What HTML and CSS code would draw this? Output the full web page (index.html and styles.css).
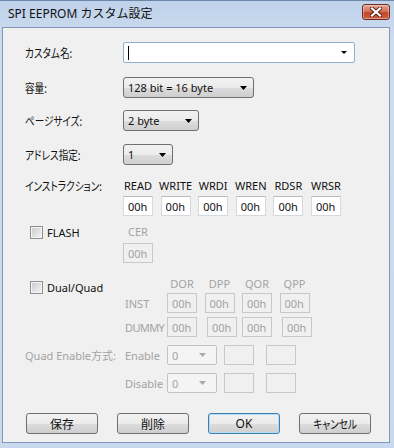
FILE: index.html
```html
<!DOCTYPE html>
<html lang="ja">
<head>
    <meta charset="UTF-8">
    <meta name="viewport" content="width=device-width, initial-scale=1.0">
    <title>SPI EEPROM カスタム設定</title>
    <link rel="stylesheet" href="styles.css">
</head>
<body>

    <div class="window">
        <!-- Title bar -->
        <div class="titlebar">
            <span class="title">SPI EEPROM カスタム設定</span>
            <button class="close-btn" type="button">
                <svg width="12" height="10" viewBox="0 0 12 10">
                    <path d="M2 1.5 L10 8.5 M10 1.5 L2 8.5" stroke="#5a1d14" stroke-width="4" stroke-linecap="square"/>
                    <path d="M2 1.5 L10 8.5 M10 1.5 L2 8.5" stroke="#ffffff" stroke-width="2.2" stroke-linecap="square"/>
                </svg>
            </button>
        </div>

        <div class="client">
            <!-- Basic settings -->
            <div class="row row-name">
                <span class="lbl"><span class="jp">カスタム名:</span></span>
                <div class="combo edit w-name">
                    <span class="caret"></span>
                    <span class="val"></span>
                    <svg class="arrow" width="6" height="3" viewBox="0 0 6 3"><polygon points="0,0 6,0 3,3" fill="#000"/></svg>
                </div>
            </div>
            <div class="row row-size">
                <span class="lbl"><span class="jp">容量:</span></span>
                <div class="combo w-size">
                    <span class="val">128 bit = 16 byte</span>
                    <svg class="arrow" width="7" height="4" viewBox="0 0 7 4"><polygon points="0,0 7,0 3.5,4" fill="#000"/></svg>
                </div>
            </div>
            <div class="row row-page">
                <span class="lbl"><span class="jp">ページサイズ:</span></span>
                <div class="combo w-page">
                    <span class="val">2 byte</span>
                    <svg class="arrow" width="7" height="4" viewBox="0 0 7 4"><polygon points="0,0 7,0 3.5,4" fill="#000"/></svg>
                </div>
            </div>
            <div class="row row-addr">
                <span class="lbl"><span class="jp">アドレス指定:</span></span>
                <div class="combo w-addr">
                    <span class="val">1</span>
                    <svg class="arrow" width="7" height="4" viewBox="0 0 7 4"><polygon points="0,0 7,0 3.5,4" fill="#000"/></svg>
                </div>
            </div>

            <!-- Instructions -->
            <div class="instr">
                <span class="lbl"><span class="jp">インストラクション:</span></span>
                <div class="cmd-grid">
                    <span class="hdr">READ</span>
                    <span class="hdr">WRITE</span>
                    <span class="hdr">WRDI</span>
                    <span class="hdr">WREN</span>
                    <span class="hdr">RDSR</span>
                    <span class="hdr">WRSR</span>
                    <input class="tb" type="text" value="00h">
                    <input class="tb" type="text" value="00h">
                    <input class="tb" type="text" value="00h">
                    <input class="tb" type="text" value="00h">
                    <input class="tb" type="text" value="00h">
                    <input class="tb" type="text" value="00h">
                </div>
            </div>

            <!-- FLASH -->
            <div class="flash">
                <label class="check"><span class="box"></span>FLASH</label>
                <div class="cer-col">
                    <span class="hdr off">CER</span>
                    <input class="tb" type="text" value="00h" disabled>
                </div>
            </div>

            <!-- Dual / Quad -->
            <div class="dq-row dq-head">
                <label class="check dual-check"><span class="box"></span>Dual/Quad</label>
                <span class="sub"></span>
                <span class="hdr off">DOR</span>
                <span class="hdr off">DPP</span>
                <span class="hdr off">QOR</span>
                <span class="hdr off">QPP</span>
            </div>
            <div class="dq-row dq-inst">
                <span class="lbl"></span>
                <span class="sub off">INST</span>
                <input class="tb" type="text" value="00h" disabled>
                <input class="tb" type="text" value="00h" disabled>
                <input class="tb" type="text" value="00h" disabled>
                <input class="tb" type="text" value="00h" disabled>
            </div>
            <div class="dq-row dq-dummy">
                <span class="lbl"></span>
                <span class="sub off narrow">DUMMY</span>
                <input class="tb" type="text" value="00h" disabled>
                <input class="tb nudge" type="text" value="00h" disabled>
                <input class="tb" type="text" value="00h" disabled>
                <input class="tb nudge" type="text" value="00h" disabled>
            </div>

            <div class="dq-row qe-row">
                <span class="lbl plain off">Quad Enable方式:</span>
                <span class="sub off">Enable</span>
                <div class="combo dis w-qe">
                    <span class="val">0</span>
                    <svg class="arrow" width="7" height="4" viewBox="0 0 7 4"><polygon points="0,0 7,0 3.5,4" fill="#a9a9a9"/></svg>
                </div>
                <input class="tb blank" type="text" disabled>
                <input class="tb blank far" type="text" disabled>
            </div>
            <div class="dq-row qe-row">
                <span class="lbl"></span>
                <span class="sub off">Disable</span>
                <div class="combo dis w-qe">
                    <span class="val">0</span>
                    <svg class="arrow" width="7" height="4" viewBox="0 0 7 4"><polygon points="0,0 7,0 3.5,4" fill="#a9a9a9"/></svg>
                </div>
                <input class="tb blank" type="text" disabled>
                <input class="tb blank far" type="text" disabled>
            </div>

            <!-- Buttons -->
            <div class="buttons">
                <button class="btn" type="button">保存</button>
                <button class="btn" type="button">削除</button>
                <button class="btn default" type="button">OK</button>
                <button class="btn" type="button"><span class="jp">キャンセル</span></button>
            </div>
        </div>
    </div>

</body>
</html>
```

FILE: styles.css
```css
/* General */
* {
    box-sizing: border-box;
}

body {
    margin: 0;
    width: 394px;
    height: 448px;
    overflow: hidden;
    background: #fff;
    font-family: "Noto Sans", "Noto Sans CJK JP", sans-serif;
    font-size: 11px;
    color: #111;
}

/* Window frame */
.window {
    height: 448px;
    display: flex;
    flex-direction: column;
    background: linear-gradient(#bfd2ea, #cddcef 40px, #c9d9ed);
    border-top: 1px solid #6a86a8;
    padding: 0 4px 5px 2px;
}

.titlebar {
    height: 26px;
    display: flex;
    align-items: center;
    justify-content: space-between;
    padding: 0 0 0 6px;
}

.title {
    font-size: 12px;
    line-height: 16px;
}

.close-btn {
    width: 28px;
    height: 16px;
    margin-top: -4px;
    padding: 0;
    border: 1px solid #6b2a22;
    border-radius: 3px;
    background: linear-gradient(#e3a697, #d47459 45%, #c4452b 55%, #cf6046);
    display: flex;
    align-items: center;
    justify-content: center;
    box-shadow: inset 0 0 0 1px rgba(255, 255, 255, 0.35);
}

.client {
    flex: 1;
    background: #f0f0f0;
    border: 1px solid #7f98b8;
    padding: 14px 0 0 22px;
}

/* Form rows */
.row {
    display: flex;
    align-items: center;
    height: 21px;
}

.row-name { margin-bottom: 14px; }
.row-size { margin-bottom: 12px; }
.row-page { margin-bottom: 13px; }
.row-addr { margin-bottom: 13px; }

.lbl {
    width: 98px;
    flex-shrink: 0;
    white-space: nowrap;
}

/* narrow japanese glyphs, like the UI Gothic face */
.jp {
    display: inline-block;
    font-family: "Noto Sans CJK JP", sans-serif;
    font-feature-settings: "palt";
    font-size: 12px;
    transform: scaleX(0.8);
    transform-origin: left center;
    white-space: nowrap;
}

.off {
    color: #a3a3a3;
}

/* Combo boxes */
.combo {
    height: 21px;
    display: flex;
    align-items: center;
    padding: 0 6px 0 4px;
    border: 1px solid #707070;
    border-radius: 3px;
    background: linear-gradient(#f2f2f2, #ebebeb 50%, #dddddd 51%, #cfcfcf);
}

.combo .val {
    flex: 1;
    white-space: nowrap;
}

.combo.edit {
    border-radius: 2px;
    border-color: #92aed1;
    background: #fff;
    padding: 0 7px 0 4px;
}

.combo.dis {
    border-color: #c2c2c2;
    background: #f4f4f4;
    color: #a3a3a3;
    border-radius: 2px;
    padding-right: 10px;
}

.caret {
    width: 1px;
    height: 14px;
    background: #000;
}

.w-name { width: 232px; }
.w-size { width: 131px; }
.w-page { width: 76px; }
.w-addr { width: 50px; }
.w-qe { width: 50px; height: 20px; }

/* Text boxes */
.tb {
    width: 30px;
    height: 20px;
    flex-shrink: 0;
    margin: 0;
    padding: 0 0 0 4px;
    border: 1px solid #d5d8dd;
    border-top-color: #b9bdc4;
    background: #fff;
    font-family: "Noto Sans", sans-serif;
    font-size: 11px;
    color: #111;
    outline: none;
}

.tb:disabled {
    background: #f0f0f0;
    border-color: #c8c8c8;
    color: #a3a3a3;
}

/* Instruction table */
.instr {
    display: flex;
    margin-bottom: 8px;
}

.cmd-grid {
    display: grid;
    grid-template-columns: repeat(6, 30px);
    column-gap: 7.6px;
    row-gap: 2px;
}

.hdr {
    width: 30px;
    line-height: 16px;
    white-space: nowrap;
    display: flex;
    justify-content: center;
}

.instr .lbl {
    line-height: 16px;
}

/* Checkboxes */
.check {
    width: 98px;
    flex-shrink: 0;
    display: flex;
    align-items: center;
    gap: 4px;
    padding-left: 5px;
    height: 16px;
}

.box {
    width: 13px;
    height: 13px;
    border: 1px solid #8e8f8f;
    background: linear-gradient(135deg, #cbcbcb, #f4f4f4);
    box-shadow: inset 0 0 0 1px #f4f4f4;
}

.flash {
    display: flex;
    margin-bottom: 13px;
}

.cer-col {
    display: flex;
    flex-direction: column;
    gap: 3px;
}

/* Dual / Quad block */
.dq-row {
    display: flex;
    align-items: center;
}

.dq-row .sub {
    width: 44px;
    flex-shrink: 0;
    padding-left: 2px;
    white-space: nowrap;
}

.dq-row .sub.narrow {
    letter-spacing: -0.6px;
}

.dq-row .hdr,
.dq-row .tb {
    margin-right: 7.5px;
}

.dq-head {
    height: 16px;
    align-items: flex-start;
}

.dual-check {
    margin-top: 3px;
}

.dq-inst {
    margin-top: 1px;
}

.dq-dummy {
    margin-top: 4px;
}

.dq-row .nudge {
    margin-left: 2.5px;
    margin-right: 5px;
}

.qe-row {
    margin-top: 8px;
}

.lbl.plain {
    font-family: "Noto Sans", "Noto Sans CJK JP", sans-serif;
}

.dq-row .tb.blank {
    margin-left: 7px;
    margin-right: 0;
}

.dq-row .tb.far {
    margin-left: 12px;
}

/* Buttons */
.buttons {
    display: flex;
    gap: 19px;
    margin-top: 20px;
    padding-left: 1px;
}

.btn {
    width: 72px;
    height: 21px;
    padding: 0;
    border: 1px solid #707070;
    border-radius: 3px;
    background: linear-gradient(#f2f2f2, #ebebeb 50%, #dddddd 51%, #cfcfcf);
    font-family: "Noto Sans", "Noto Sans CJK JP", sans-serif;
    font-size: 12px;
    color: #111;
}

.btn .jp {
    transform-origin: center;
}

.btn.default {
    border-color: #3c7fb1;
    box-shadow: inset 0 0 0 1px #b4dcf7;
}
```
